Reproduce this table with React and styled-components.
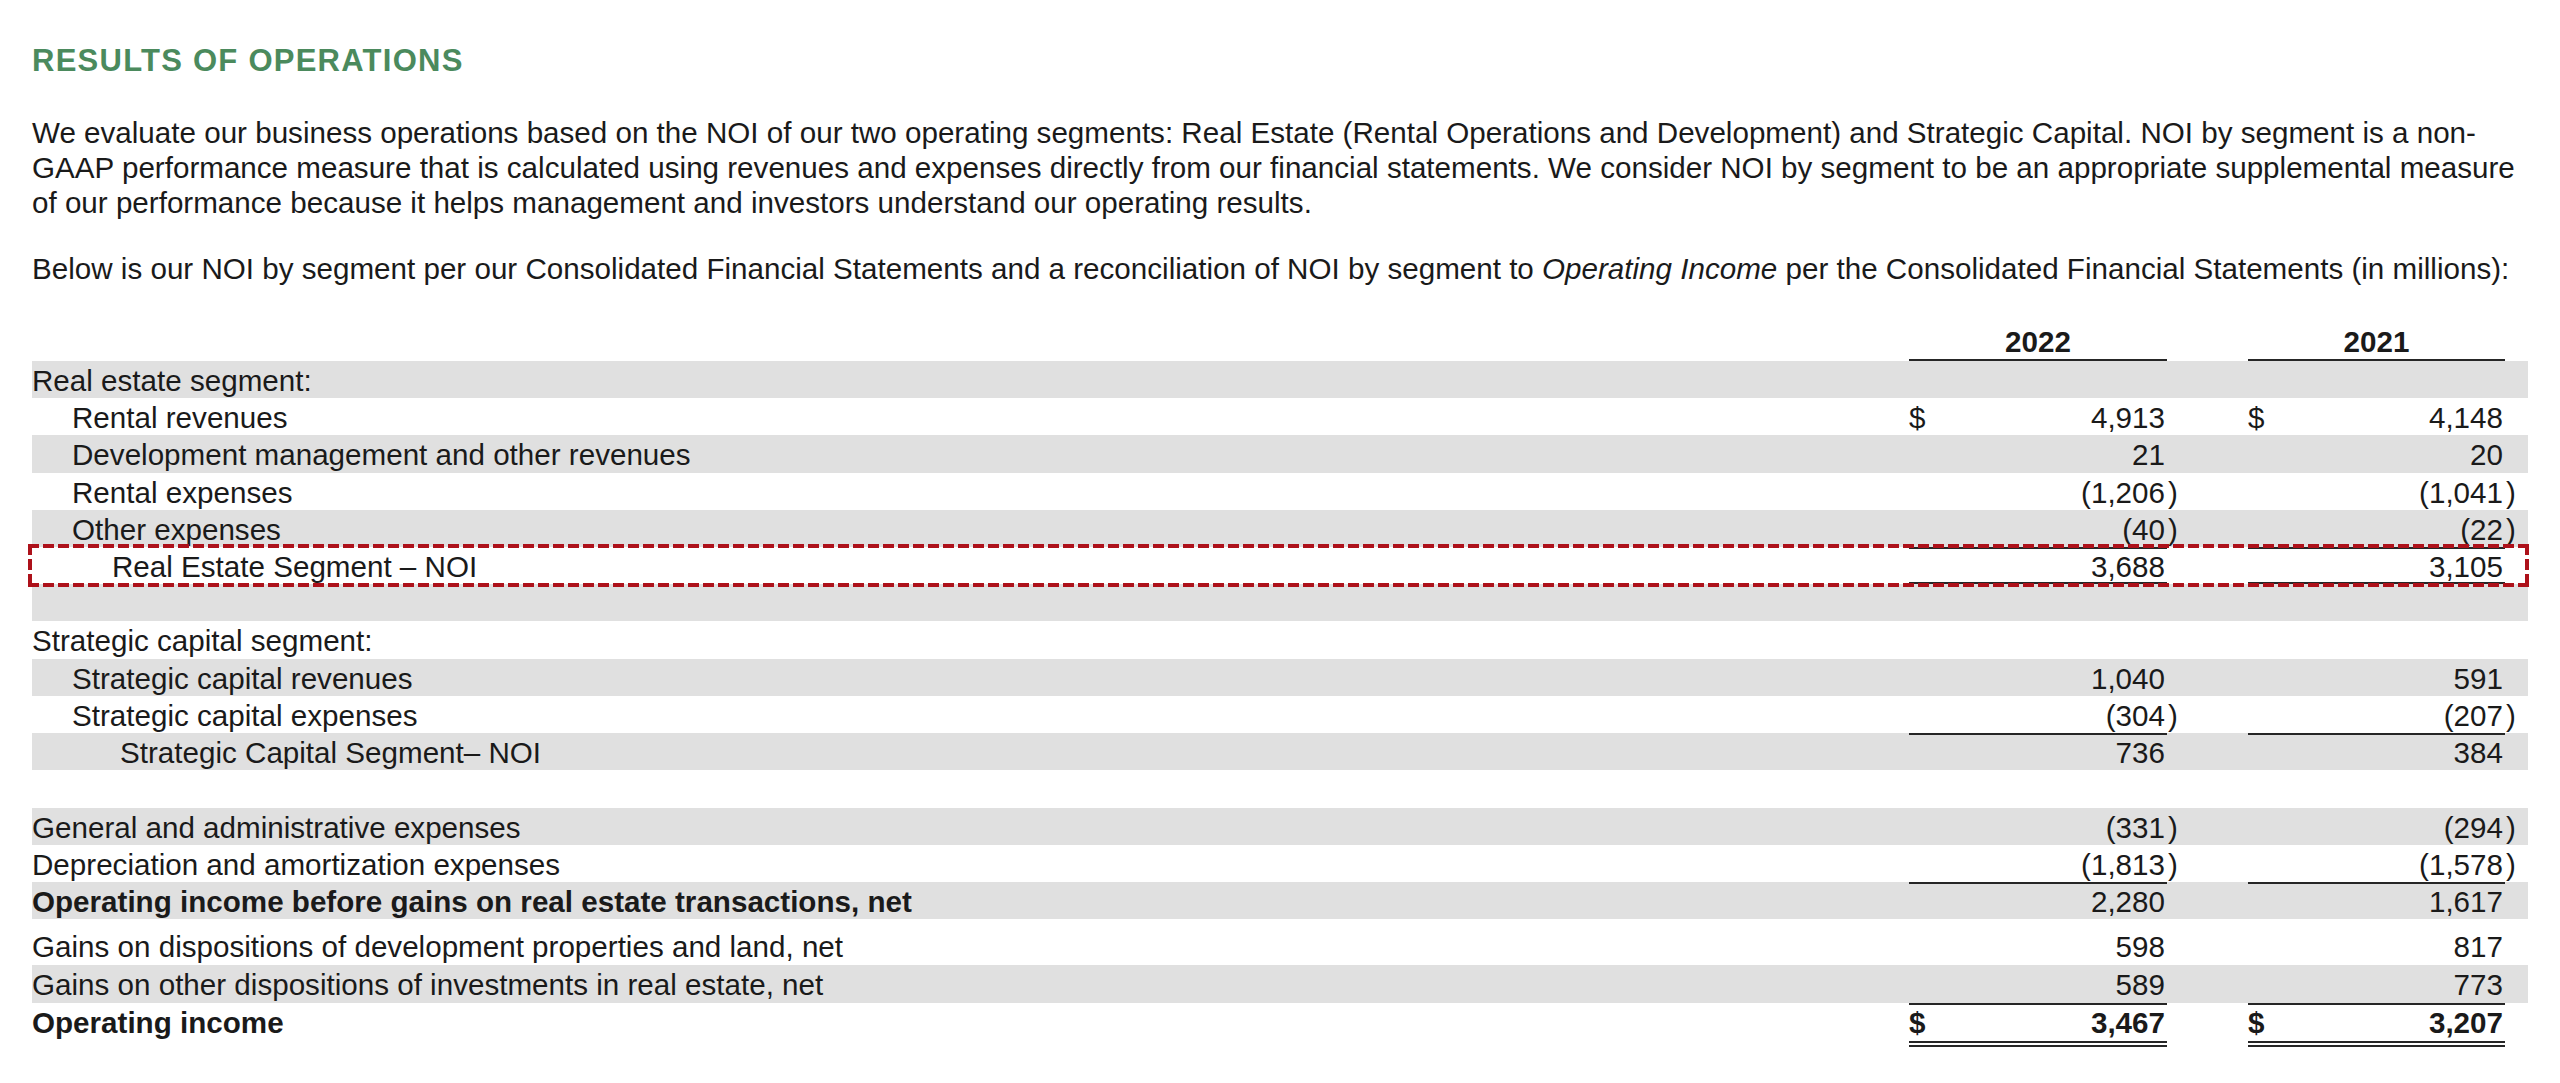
import React from "react";
import styled, { createGlobalStyle } from "styled-components";

// page reset
const GlobalStyle = createGlobalStyle`
  html, body {
    margin: 0;
    padding: 0;
    background: #fff;
  }
  body {
    font-family: "Liberation Sans", Arial, sans-serif;
    color: #1a1a1a;
  }
`;

const COLS = "1fr 258px 14px 67px 257px 14px 9px";
const RULE = "#262626";

const Page = styled.div`
  padding: 43px 32px 0;
  font-size: 29.6px;
`;

const Title = styled.h2`
  margin: 0;
  font-size: 31px;
  line-height: 36px;
  font-weight: 700;
  letter-spacing: 1.25px;
  color: #4b8a5d;
`;

const Para = styled.p`
  margin: ${(p) => p.$gap}px 0 0;
  line-height: 35.2px;
`;

const Table = styled.div`
  margin-top: 38px;
`;

const HeadRow = styled.div`
  display: grid;
  grid-template-columns: ${COLS};
  height: 37px;
  line-height: 35px;
`;

const Year = styled.div`
  text-align: center;
  font-weight: 700;
  box-shadow: inset 0 -2px 0 ${RULE};
`;

const Row = styled.div`
  position: relative;
  display: grid;
  grid-template-columns: ${COLS};
  height: ${(p) => (p.$tall ? 46 : 37.24)}px;
  line-height: 35px;
  white-space: nowrap;
  background: ${(p) => (p.$shade ? "#e0e0e0" : "transparent")};

  & > * {
    box-sizing: border-box;
    padding-top: ${(p) => (p.$tall ? 10 : 2)}px;
  }
`;

const Label = styled.div`
  padding-left: ${(p) => [0, 40, 80, 88][p.$indent || 0]}px;
  font-weight: ${(p) => (p.$bold ? 700 : 400)};
`;

const Amount = styled.div`
  display: flex;
  justify-content: space-between;
  padding-right: 2px;
  font-weight: ${(p) => (p.$bold ? 700 : 400)};
  box-shadow: ${(p) =>
    p.$rule === "both"
      ? `inset 0 2px 0 ${RULE}, inset 0 -2px 0 ${RULE}`
      : p.$rule
      ? `inset 0 2px 0 ${RULE}`
      : "none"};
`;

const Paren = styled.div`
  padding-left: 1px;
`;

// double rule under the grand total
const RuleRow = styled.div`
  display: grid;
  grid-template-columns: ${COLS};
  padding-top: 1px;
`;

const DoubleRule = styled.div`
  height: 6px;
  box-sizing: border-box;
  border-top: 2px solid ${RULE};
  border-bottom: 2px solid ${RULE};
`;

// red dashed highlight drawn over the NOI row
const Callout = styled.div`
  position: absolute;
  z-index: 1;
  left: -4px;
  right: -1px;
  top: -3px;
  bottom: -3px;
  pointer-events: none;
  background:
    linear-gradient(90deg, #ad111a 0 11px, transparent 11px 15px) top left / 15px 4px repeat-x,
    linear-gradient(90deg, #ad111a 0 11px, transparent 11px 15px) bottom left / 15px 4px repeat-x,
    linear-gradient(180deg, #ad111a 0 11px, transparent 11px 15px) top left / 4px 15px repeat-y,
    linear-gradient(180deg, #ad111a 0 11px, transparent 11px 15px) top right / 4px 15px repeat-y;
`;

const rows = [
  { label: "Real estate segment:" },
  { label: "Rental revenues", indent: 1, a: "4,913", b: "4,148", dollar: true },
  { label: "Development management and other revenues", indent: 1, a: "21", b: "20" },
  { label: "Rental expenses", indent: 1, a: "(1,206", b: "(1,041", paren: true },
  { label: "Other expenses", indent: 1, a: "(40", b: "(22", paren: true },
  { label: "Real Estate Segment – NOI", indent: 2, a: "3,688", b: "3,105", rule: "both", callout: true },
  {},
  { label: "Strategic capital segment:" },
  { label: "Strategic capital revenues", indent: 1, a: "1,040", b: "591" },
  { label: "Strategic capital expenses", indent: 1, a: "(304", b: "(207", paren: true },
  { label: "Strategic Capital Segment– NOI", indent: 3, a: "736", b: "384", rule: "top" },
  {},
  { label: "General and administrative expenses", a: "(331", b: "(294", paren: true },
  { label: "Depreciation and amortization expenses", a: "(1,813", b: "(1,578", paren: true },
  { label: "Operating income before gains on real estate transactions, net", labelBold: true, a: "2,280", b: "1,617", rule: "top" },
  { label: "Gains on dispositions of development properties and land, net", a: "598", b: "817", tall: true },
  { label: "Gains on other dispositions of investments in real estate, net", a: "589", b: "773" },
  { label: "Operating income", labelBold: true, bold: true, dollar: true, a: "3,467", b: "3,207", rule: "top" },
];

function AmountCell({ row, value }) {
  return (
    <Amount $rule={row.rule} $bold={row.bold}>
      <span>{row.dollar ? "$" : ""}</span>
      <span>{value}</span>
    </Amount>
  );
}

export default function App() {
  return (
    <Page>
      <GlobalStyle />
      <Title>RESULTS OF OPERATIONS</Title>
      <Para $gap={36}>
        We evaluate our business operations based on the NOI of our two operating segments: Real Estate (Rental
        Operations and Development) and Strategic Capital. NOI by segment is a non-GAAP performance measure that is
        calculated using revenues and expenses directly from our financial statements. We consider NOI by segment to
        be an appropriate supplemental measure of our performance because it helps management and investors
        understand our operating results.
      </Para>
      <Para $gap={30}>
        Below is our NOI by segment per our Consolidated Financial Statements and a reconciliation of NOI by segment
        to <em>Operating Income</em> per the Consolidated Financial Statements (in millions):
      </Para>

      <Table>
        <HeadRow>
          <div />
          <Year>2022</Year>
          <div />
          <div />
          <Year>2021</Year>
          <div />
          <div />
        </HeadRow>
        {rows.map((row, i) => (
          <Row key={i} $shade={i % 2 === 0} $tall={row.tall}>
            <Label $indent={row.indent} $bold={row.labelBold}>
              {row.label}
            </Label>
            {row.a ? <AmountCell row={row} value={row.a} /> : <div />}
            <Paren>{row.paren ? ")" : ""}</Paren>
            <div />
            {row.b ? <AmountCell row={row} value={row.b} /> : <div />}
            <Paren>{row.paren ? ")" : ""}</Paren>
            <div />
            {row.callout && <Callout />}
          </Row>
        ))}
        <RuleRow>
          <div />
          <DoubleRule />
          <div />
          <div />
          <DoubleRule />
          <div />
          <div />
        </RuleRow>
      </Table>
    </Page>
  );
}
